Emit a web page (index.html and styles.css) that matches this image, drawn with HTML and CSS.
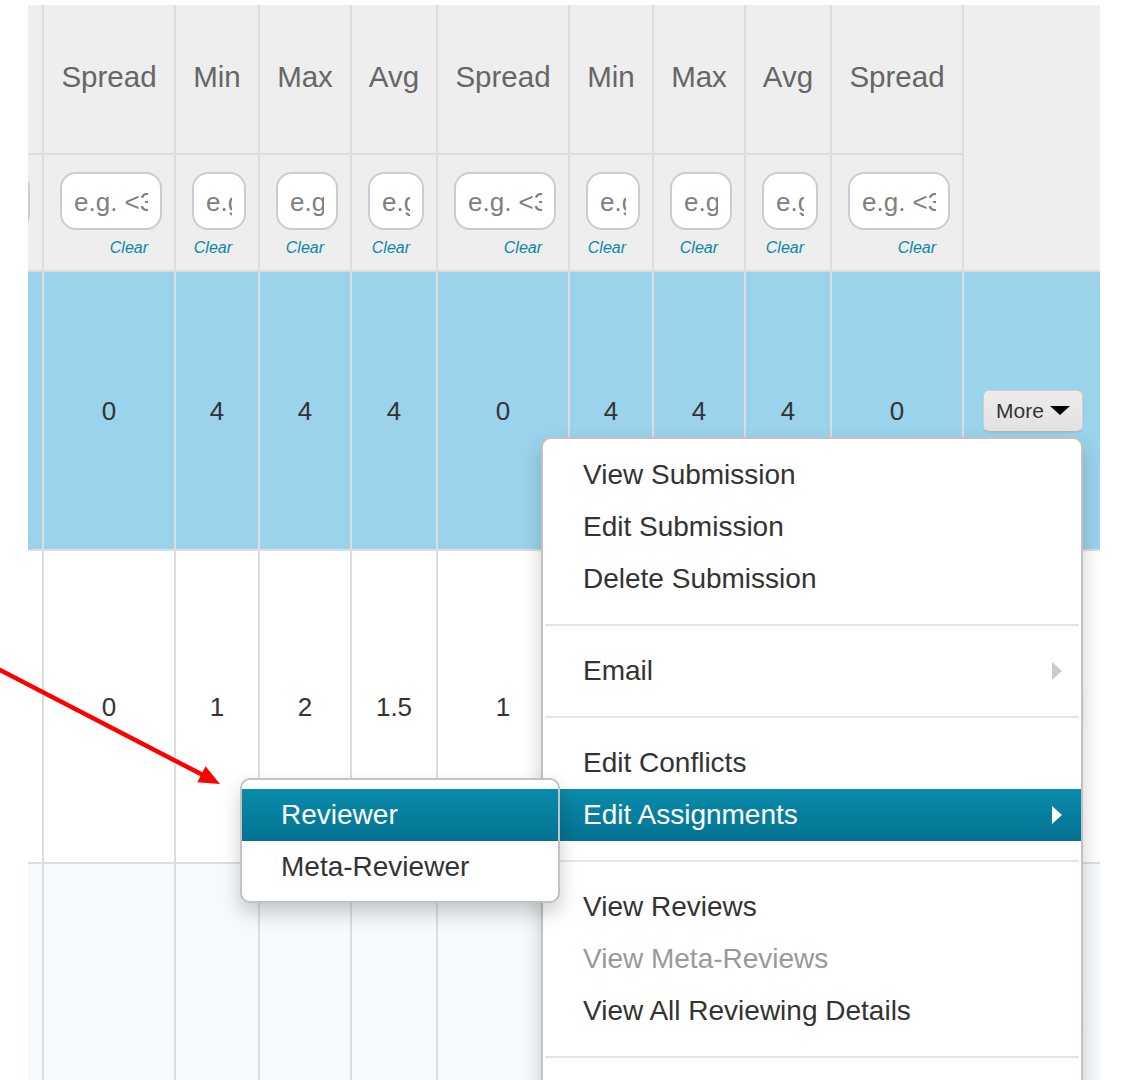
FILE: index.html
```html
<!DOCTYPE html>
<html>
<head>
<meta charset="utf-8">
<link rel="stylesheet" href="styles.css">
</head>
<body>
<div class="page">
  <div class="grid">
    <!-- header row 1 -->
    <div class="cell head"></div>
    <div class="cell head">Spread</div>
    <div class="cell head">Min</div>
    <div class="cell head">Max</div>
    <div class="cell head">Avg</div>
    <div class="cell head">Spread</div>
    <div class="cell head">Min</div>
    <div class="cell head">Max</div>
    <div class="cell head">Avg</div>
    <div class="cell head">Spread</div>
    <div class="cell actions-head last"></div>

    <!-- header row 2: filters -->
    <div class="cell filter c0"><input type="text" placeholder="e.g. &lt;3"></div>
    <div class="cell filter"><input type="text" placeholder="e.g. &lt;3"><a class="clear">Clear</a></div>
    <div class="cell filter"><input type="text" placeholder="e.g. &lt;3"><a class="clear">Clear</a></div>
    <div class="cell filter"><input type="text" placeholder="e.g. &lt;3"><a class="clear">Clear</a></div>
    <div class="cell filter"><input type="text" placeholder="e.g. &lt;3"><a class="clear">Clear</a></div>
    <div class="cell filter"><input type="text" placeholder="e.g. &lt;3"><a class="clear">Clear</a></div>
    <div class="cell filter"><input type="text" placeholder="e.g. &lt;3"><a class="clear">Clear</a></div>
    <div class="cell filter"><input type="text" placeholder="e.g. &lt;3"><a class="clear">Clear</a></div>
    <div class="cell filter"><input type="text" placeholder="e.g. &lt;3"><a class="clear">Clear</a></div>
    <div class="cell filter"><input type="text" placeholder="e.g. &lt;3"><a class="clear">Clear</a></div>

    <!-- row 1 (selected) -->
    <div class="cell num r1"></div>
    <div class="cell num r1">0</div>
    <div class="cell num r1">4</div>
    <div class="cell num r1">4</div>
    <div class="cell num r1">4</div>
    <div class="cell num r1">0</div>
    <div class="cell num r1">4</div>
    <div class="cell num r1">4</div>
    <div class="cell num r1">4</div>
    <div class="cell num r1">0</div>
    <div class="cell act r1 last"><button class="more">More<span class="caret"></span></button></div>

    <!-- row 2 -->
    <div class="cell num r2"></div>
    <div class="cell num r2">0</div>
    <div class="cell num r2">1</div>
    <div class="cell num r2">2</div>
    <div class="cell num r2">1.5</div>
    <div class="cell num r2">1</div>
    <div class="cell num r2">1</div>
    <div class="cell num r2">2</div>
    <div class="cell num r2">1.5</div>
    <div class="cell num r2">1</div>
    <div class="cell act r2 last"><button class="more">More<span class="caret"></span></button></div>

    <!-- row 3 -->
    <div class="cell num r3"></div>
    <div class="cell num r3"></div>
    <div class="cell num r3"></div>
    <div class="cell num r3"></div>
    <div class="cell num r3"></div>
    <div class="cell num r3"></div>
    <div class="cell num r3"></div>
    <div class="cell num r3"></div>
    <div class="cell num r3"></div>
    <div class="cell num r3"></div>
    <div class="cell act r3 last"><button class="more">More<span class="caret"></span></button></div>
  </div>

  <svg class="arrow" width="260" height="820" viewBox="0 0 260 820">
    <line x1="-10" y1="664.8" x2="202" y2="774.6" stroke="#ff0000" stroke-width="4.5"/>
    <polygon points="220,784 197.3,782.3 205.5,766.3" fill="#ff0000"/>
  </svg>

  <div class="menu">
    <div class="item">View Submission</div>
    <div class="item">Edit Submission</div>
    <div class="item">Delete Submission</div>
    <div class="divider"></div>
    <div class="item has-sub">Email</div>
    <div class="divider"></div>
    <div class="item">Edit Conflicts</div>
    <div class="item has-sub active">Edit Assignments</div>
    <div class="divider"></div>
    <div class="item">View Reviews</div>
    <div class="item disabled">View Meta-Reviews</div>
    <div class="item">View All Reviewing Details</div>
    <div class="divider"></div>
  </div>

  <div class="submenu">
    <div class="item active">Reviewer</div>
    <div class="item">Meta-Reviewer</div>
  </div>
</div>
</body>
</html>
```
FILE: styles.css
```css
* { box-sizing: border-box; }

html, body {
  margin: 0;
  padding: 0;
  background: #fff;
}

body {
  font-family: "Liberation Sans", Arial, Helvetica, sans-serif;
  overflow: hidden;
}

.page {
  position: relative;
  width: 1132px;
  height: 1080px;
  overflow: hidden;
}

.grid {
  display: grid;
  margin: 5px 0 0 28px;
  width: 1072px;
  grid-template-columns: 16px 132px 84px 92px 86px 132px 84px 92px 86px 132px 136px;
  grid-template-rows: 150px 117px 279px 313px 300px;
}

.cell {
  border-right: 2px solid #dddddd;
  border-bottom: 2px solid #dddddd;
  overflow: hidden;
  display: flex;
  align-items: center;
  justify-content: center;
  min-width: 0;
}

.cell.last { border-right: none; }

.head {
  background: #eeeeee;
  color: #666666;
  font-size: 29.5px;
  padding-bottom: 4px;
}

.actions-head {
  grid-column: 11;
  grid-row: 1 / span 2;
  background: #eeeeee;
}

.filter {
  background: #eeeeee;
  flex-direction: column;
  align-items: flex-start;
  justify-content: flex-start;
}

.filter input {
  display: block;
  margin: 17px 0 0 16px;
  width: calc(100% - 28px);
  min-width: 0;
  height: 58px;
  border: 2px solid #cccccc;
  border-radius: 16px;
  background: #ffffff;
  padding: 2px 12px 0 12px;
  font-family: "Liberation Sans", Arial, sans-serif;
  font-size: 26px;
  color: #555;
  outline: none;
}

.filter input::placeholder { color: #808080; }

.filter.c0 input {
  width: 100px;
  margin-left: -98px;
  flex: none;
}

.filter .clear {
  align-self: flex-end;
  margin: 8px 26px 0 0;
  font-size: 16px;
  line-height: 19px;
  font-style: italic;
  color: #0b86ab;
}

.num {
  font-size: 26px;
  color: #333333;
  padding-top: 1px;
}

.r1 { background: #9bd3ec; }
.r2 { background: #ffffff; }
.r3 { background: #f5fafd; }

.act {
  justify-content: flex-end;
  padding-right: 17px;
}

.r3.act { align-items: flex-start; padding-top: 124px; }

.more {
  display: flex;
  align-items: center;
  width: 100px;
  height: 42px;
  padding: 0 0 0 12px;
  background: linear-gradient(#ececec, #e2e2e2);
  border: 1px solid #cfcfcf;
  border-bottom-color: #b5b5b5;
  border-radius: 6px;
  box-shadow: 0 1px 2px rgba(0, 0, 0, 0.08);
  font-family: "Liberation Sans", Arial, sans-serif;
  font-size: 21px;
  color: #333333;
}

.caret {
  display: inline-block;
  width: 0;
  height: 0;
  margin-left: 6px;
  border-top: 9px solid #000;
  border-left: 10px solid transparent;
  border-right: 10px solid transparent;
}

.arrow {
  position: absolute;
  left: 0;
  top: 0;
  z-index: 2;
}

.menu {
  position: absolute;
  left: 541px;
  top: 437px;
  width: 542px;
  height: 720px;
  background: #ffffff;
  border: 2px solid rgba(0, 0, 0, 0.24);
  border-radius: 10px;
  padding-top: 10px;
  box-shadow: 0 10px 20px rgba(0, 0, 0, 0.2);
  z-index: 3;
}

.submenu {
  position: absolute;
  left: 240px;
  top: 778px;
  width: 320px;
  background: #ffffff;
  border: 2px solid rgba(0, 0, 0, 0.24);
  border-radius: 10px;
  padding: 9px 0 8px;
  box-shadow: 0 10px 20px rgba(0, 0, 0, 0.2);
  z-index: 4;
}

.item {
  position: relative;
  height: 52px;
  line-height: 52px;
  padding-left: 40px;
  font-size: 28px;
  color: #333333;
  white-space: nowrap;
}

.submenu .item { padding-left: 39px; }

.item.disabled { color: #999999; }

.item.active {
  color: #ffffff;
  background: linear-gradient(#0a8cad, #04718f);
}

.has-sub::after {
  content: "";
  position: absolute;
  right: 19px;
  top: 50%;
  margin-top: -9px;
  width: 0;
  height: 0;
  border-top: 9px solid transparent;
  border-bottom: 9px solid transparent;
  border-left: 10px solid #cccccc;
}

.has-sub.active::after { border-left-color: #ffffff; }

.divider {
  height: 2px;
  margin: 19px 2px;
  background: #e5e5e5;
}
```
